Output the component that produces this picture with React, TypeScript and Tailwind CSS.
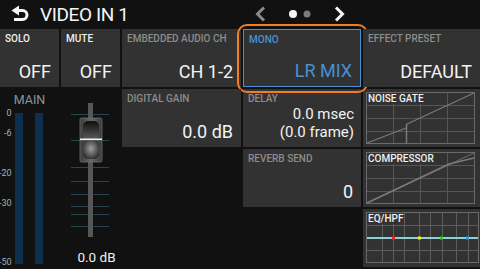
import React from "react";

const FONT = { fontFamily: "Roboto, 'Liberation Sans', sans-serif" };

function Cell({
  label,
  value,
  labelClass = "text-[#8c8c8c]",
  valueClass = "text-[#f2f2f2]",
  extra = "",
  children,
}: {
  label: string;
  value?: React.ReactNode;
  labelClass?: string;
  valueClass?: string;
  extra?: string;
  children?: React.ReactNode;
}) {
  return (
    <div className={`relative flex flex-col justify-between bg-[#323232] pl-[5px] pr-[8px] pt-[4px] pb-[5px] ${extra}`}>
      <div className={`text-[10px] leading-[12px] font-medium whitespace-nowrap ${labelClass}`}>{label}</div>
      {value !== undefined && (
        <div className={`text-right text-[18px] leading-[20px] whitespace-nowrap ${valueClass}`}>{value}</div>
      )}
      {children}
    </div>
  );
}

function GraphLabel({ text, w }: { text: string; w: number }) {
  return (
    <>
      <rect x={4} y={4} width={w} height={11} fill="#323232" />
      <text x={5} y={13} fontSize={10} fontWeight={500} fill="#f0f0f0" style={FONT}>
        {text}
      </text>
    </>
  );
}

function NoiseGate() {
  return (
    <div className="bg-[#323232]">
      <svg width={117} height={58}>
        <rect x={3.5} y={3.5} width={108} height={51} fill="none" stroke="#6a6a6a" />
        {[30.5, 57.5, 84.5].map((x) => (
          <line key={x} x1={x} y1={4} x2={x} y2={54} stroke="#555" />
        ))}
        {[16.5, 29.5, 42.5].map((y) => (
          <line key={y} x1={4} y1={y} x2={111} y2={y} stroke="#555" />
        ))}
        <line x1={4} y1={54} x2={43} y2={39} stroke="#7a7a7a" strokeWidth={1.3} />
        <line x1={43.5} y1={35} x2={43.5} y2={54} stroke="#7a7a7a" strokeWidth={1.5} />
        <line x1={43} y1={35.5} x2={111} y2={4} stroke="#7a7a7a" strokeWidth={1.3} />
        <GraphLabel text="NOISE GATE" w={60} />
      </svg>
    </div>
  );
}

function Compressor() {
  return (
    <div className="bg-[#323232]">
      <svg width={117} height={58}>
        <rect x={3.5} y={3.5} width={108} height={51} fill="none" stroke="#6a6a6a" />
        {[30.5, 57.5, 84.5].map((x) => (
          <line key={x} x1={x} y1={4} x2={x} y2={54} stroke="#555" />
        ))}
        {[16.5, 29.5, 42.5].map((y) => (
          <line key={y} x1={4} y1={y} x2={111} y2={y} stroke="#555" />
        ))}
        <line x1={4} y1={54} x2={111} y2={4} stroke="#6e6e6e" strokeWidth={1} />
        <polyline points="4,54 86,15 111,9" fill="none" stroke="#7a7a7a" strokeWidth={1.6} />
        <GraphLabel text="COMPRESSOR" w={62} />
      </svg>
    </div>
  );
}

function EqHpf() {
  const xs = [19.5, 30.5, 41.5, 56.5, 67.5, 79.5, 93.5, 105.5];
  return (
    <div className="bg-[#323232]">
      <svg width={117} height={58}>
        <rect x={3.5} y={3.5} width={112} height={50} fill="none" stroke="#6a6a6a" />
        {xs.map((x) => (
          <line key={x} x1={x} y1={4} x2={x} y2={53} stroke="#5c5c5c" />
        ))}
        {[16.5, 41.5].map((y) => (
          <line key={y} x1={4} y1={y} x2={115} y2={y} stroke="#5c5c5c" />
        ))}
        <rect x={4} y={28} width={111} height={2} fill="#8fd0d6" />
        <rect x={29} y={27.5} width={3} height={3} fill="#ff2020" />
        <rect x={55} y={27.5} width={3} height={3} fill="#f0f020" />
        <rect x={77} y={27.5} width={3} height={3} fill="#30d030" />
        <rect x={103} y={27.5} width={3} height={3} fill="#30a0f0" />
        <GraphLabel text="EQ/HPF" w={34} />
      </svg>
    </div>
  );
}

function MainMeter() {
  const ticks = [25.5, 51.5, 78.5, 92.5, 105.5, 117.5, 125.5, 137.5];
  const scale: [string, number][] = [
    ["0", 27],
    ["-6", 47],
    ["-20", 87],
    ["-30", 117],
    ["-50", 176],
  ];
  return (
    <div className="col-span-2 row-span-3">
      <svg width={120} height={178}>
        <defs>
          <linearGradient id="knobOuter" x1="0" y1="0" x2="1" y2="0">
            <stop offset="0" stopColor="#3a3a3a" />
            <stop offset="0.5" stopColor="#6a6a6a" />
            <stop offset="1" stopColor="#3a3a3a" />
          </linearGradient>
          <linearGradient id="knobTop" x1="0" y1="0" x2="0" y2="1">
            <stop offset="0" stopColor="#0e0e0e" />
            <stop offset="1" stopColor="#5a5a5a" />
          </linearGradient>
          <radialGradient id="knobBot" cx="0.5" cy="0.45" r="0.6">
            <stop offset="0" stopColor="#a0a0a0" />
            <stop offset="1" stopColor="#2a2a2a" />
          </radialGradient>
        </defs>
        <text x={29.5} y={15} fontSize={12.5} fill="#8a949c" textAnchor="middle" style={FONT}>
          MAIN
        </text>
        {scale.map(([t, y]) => (
          <text key={t} x={11.5} y={y} fontSize={9} fill="#9fb0bd" textAnchor="end" style={FONT}>
            {t}
          </text>
        ))}
        <rect x={15} y={24} width={8} height={151} fill="#0f2f4e" />
        <rect x={35} y={24} width={8} height={151} fill="#0f2f4e" />
        {ticks.map((y) => (
          <line key={y} x1={71} y1={y} x2={109} y2={y} stroke="#284550" />
        ))}
        <rect x={88} y={14} width={5} height={134} fill="#565656" />
        <rect x={80} y={29} width={22} height={44} rx={1.5} fill="url(#knobOuter)" stroke="#707070" strokeWidth={0.8} />
        <rect x={83} y={32} width={16} height={18} rx={5} fill="url(#knobTop)" />
        <rect x={83} y={51} width={16} height={19} rx={5} fill="url(#knobBot)" />
        <rect x={80} y={49.5} width={22} height={1.6} fill="#f4f4f4" />
        <text x={96.5} y={173} fontSize={13.5} fill="#f2f2f2" textAnchor="middle" style={FONT}>
          0.0 dB
        </text>
      </svg>
    </div>
  );
}

export default function App() {
  return (
    <div className="w-[480px] h-[269px] overflow-hidden bg-[#111111] text-white" style={FONT}>
      <div className="flex h-[29px] items-center">
        <div className="flex w-[250px] items-center">
          <svg width={40} height={29} className="shrink-0">
            <polygon points="11.5,10.5 19,5.5 19,15.5" fill="#f5f5f5" />
            <path d="M18 10.5 H22.5 A4.5 4.5 0 0 1 22.5 19.5 H14" fill="none" stroke="#f5f5f5" strokeWidth={3} />
          </svg>
          <span className="text-[19px] leading-[29px] tracking-[-0.4px] text-[#f5f5f5]">VIDEO IN 1</span>
        </div>
        <svg width={100} height={29} className="shrink-0">
          <polyline points="14,7.5 7.5,14 14,20.5" fill="none" stroke="#8a8a8a" strokeWidth={3} />
          <circle cx={43} cy={14} r={4} fill="#f5f5f5" />
          <circle cx={57} cy={14} r={3.5} fill="#7a7a7a" />
          <polyline points="86,7.5 92.5,14 86,20.5" fill="none" stroke="#f5f5f5" strokeWidth={3} />
        </svg>
      </div>
      <div className="grid grid-cols-[59px_59px_119px_118px_117px] grid-rows-[58px_58px_58px_58px] gap-[2px]">
        <Cell label="SOLO" value="OFF" labelClass="text-[#f0f0f0]" />
        <Cell label="MUTE" value="OFF" labelClass="text-[#f0f0f0]" />
        <Cell label="EMBEDDED AUDIO CH" value="CH 1-2" />
        <Cell
          label="MONO"
          value="LR MIX"
          labelClass="text-[#4c90d2]"
          valueClass="text-[#4a8fd3]"
          extra="border border-[#4d8fcf] pl-[4px] pt-[3px] pb-[4px] pr-[7px]"
        >
          <div className="pointer-events-none absolute -top-[6px] -left-[7px] -bottom-[7px] -right-[8px] rounded-[10px] border-[2.5px] border-[#f27d22]" />
        </Cell>
        <Cell label="EFFECT PRESET" value="DEFAULT" />

        <MainMeter />
        <Cell label="DIGITAL GAIN" value="0.0 dB" />
        <div className="flex flex-col justify-between bg-[#323232] pl-[5px] pr-[7px] pt-[4px] pb-[6px]">
          <div className="text-[10px] leading-[12px] font-medium text-[#8c8c8c]">DELAY</div>
          <div className="text-right text-[15px] leading-[18px] text-[#f2f2f2]">
            <div>0.0 msec</div>
            <div>(0.0 frame)</div>
          </div>
        </div>
        <NoiseGate />

        <div />
        <Cell label="REVERB SEND" value="0" />
        <Compressor />

        <div />
        <div />
        <EqHpf />
      </div>
    </div>
  );
}
